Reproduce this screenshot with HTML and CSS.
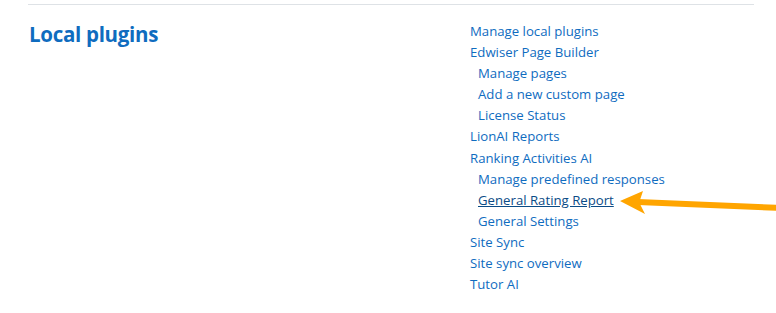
FILE: index.html
```html
<!DOCTYPE html>
<html>
<head>
<meta charset="utf-8">
<link rel="stylesheet" href="styles.css">
</head>
<body>
<div class="page">
  <div class="category">
    <h2 class="cat-title">Local plugins</h2>
    <ul class="links">
      <li><a href="#">Manage local plugins</a></li>
      <li><a href="#">Edwiser Page Builder</a></li>
      <li class="sub"><a href="#">Manage pages</a></li>
      <li class="sub"><a href="#">Add a new custom page</a></li>
      <li class="sub"><a href="#">License Status</a></li>
      <li><a href="#">LionAI Reports</a></li>
      <li><a href="#">Ranking Activities AI</a></li>
      <li class="sub"><a href="#">Manage predefined responses</a></li>
      <li class="sub"><a href="#" class="hover">General Rating Report</a></li>
      <li class="sub"><a href="#">General Settings</a></li>
      <li><a href="#">Site Sync</a></li>
      <li><a href="#">Site sync overview</a></li>
      <li><a href="#">Tutor AI</a></li>
    </ul>
  </div>
</div>
<svg class="arrow" width="160" height="30" viewBox="0 0 160 30">
  <polygon points="0,11 23,1 20,10 20,14 25,24" fill="#ffa500"/>
  <polygon points="18,9 160,15 160,21 18,15" fill="#ffa500"/>
</svg>
</body>
</html>
```
FILE: styles.css
```css
html, body {
  margin: 0;
  padding: 0;
  background: #fff;
}
body {
  font-family: "Open Sans", "Noto Sans", sans-serif;
  font-size: 14px;
  color: #1d2125;
  position: relative;
  width: 776px;
  height: 313px;
  overflow: hidden;
}
.page {
  padding: 4px 22px 0 28px;
}
.category {
  border-top: 1px solid #dee2e6;
  display: grid;
  grid-template-columns: 442px 1fr;
  padding-top: 15px;
}
.cat-title {
  margin: 0 0 0 1px;
  font-size: 20.5px;
  font-weight: 700;
  color: #0f6cbf;
  line-height: 28px;
  letter-spacing: -0.3px;
}
.links {
  list-style: none;
  margin: 0;
  padding: 0;
}
.links li {
  line-height: 21.1px;
  height: 21.1px;
}
.links li.sub {
  padding-left: 8px;
}
.links a {
  color: #0f6cbf;
  text-decoration: none;
  font-size: 13.2px;
}
.links a.hover {
  color: #0a4b86;
  text-decoration: underline;
}
.arrow {
  position: absolute;
  left: 620px;
  top: 190px;
}
```
